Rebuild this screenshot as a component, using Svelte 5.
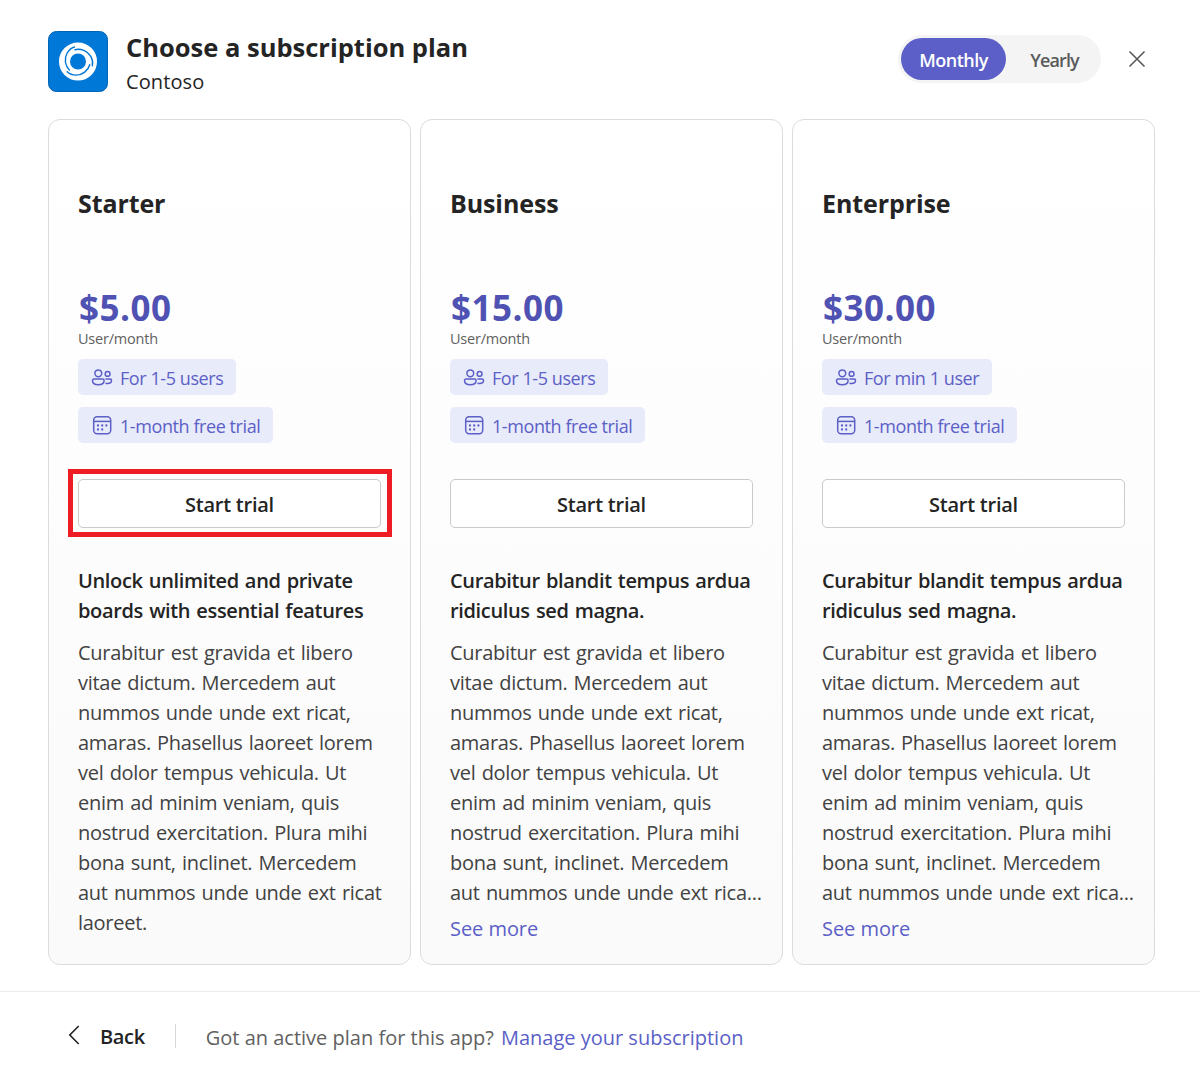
<script>
  const body = [
    'Curabitur est gravida et libero',
    'vitae dictum. Mercedem aut',
    'nummos unde unde ext ricat,',
    'amaras. Phasellus laoreet lorem',
    'vel dolor tempus vehicula. Ut',
    'enim ad minim veniam, quis',
    'nostrud exercitation. Plura mihi',
    'bona sunt, inclinet. Mercedem',
  ];
  const full = [...body, 'aut nummos unde unde ext ricat', 'laoreet.'];
  const clipped = [...body, 'aut nummos unde unde ext rica...'];
  const teaser = ['Curabitur blandit tempus ardua', 'ridiculus sed magna.'];

  const plans = [
    {
      name: 'Starter', price: '$5.00', users: 'For 1-5 users', highlighted: true,
      heading: ['Unlock unlimited and private', 'boards with essential features'],
      lines: full, more: false,
    },
    { name: 'Business', price: '$15.00', users: 'For 1-5 users', heading: teaser, lines: clipped, more: true },
    { name: 'Enterprise', price: '$30.00', users: 'For min 1 user', heading: teaser, lines: clipped, more: true },
  ];
</script>

<div class="dialog">
  <header>
    <svg class="logo" width="60" height="61" viewBox="0 0 60 61">
      <rect x="0.5" y="0.5" width="59" height="60" rx="8" fill="#0078d7" stroke="#0064b4" />
      <circle cx="30" cy="30.5" r="13.5" fill="none" stroke="#fff" stroke-width="11" />
      <!-- three spiral cuts through the ring -->
      <g fill="none" stroke="#0078d7" stroke-width="1.4" stroke-linecap="round">
        <path d="M26.5 16 C20 18 16.5 25 17.4 31 C18 34.5 19.2 37 21.3 39" />
        <path d="M26.5 16 C20 18 16.5 25 17.4 31 C18 34.5 19.2 37 21.3 39" transform="rotate(120 30 30.5)" />
        <path d="M26.5 16 C20 18 16.5 25 17.4 31 C18 34.5 19.2 37 21.3 39" transform="rotate(240 30 30.5)" />
      </g>
    </svg>
    <div class="titles">
      <h1>Choose a subscription plan</h1>
      <p class="publisher">Contoso</p>
    </div>
    <div class="toggle">
      <button class="option selected">Monthly</button>
      <button class="option yearly">Yearly</button>
    </div>
    <button class="close" aria-label="Close">
      <svg width="18" height="18" viewBox="0 0 18 18"><path d="M1.5 1.5 L16.5 16.5 M16.5 1.5 L1.5 16.5" fill="none" stroke="#555" stroke-width="1.5" /></svg>
    </button>
  </header>

  <main>
    {#each plans as plan}
      <section class="card">
        <h2>{plan.name}</h2>
        <div class="price">{plan.price}</div>
        <div class="unit">User/month</div>
        <div class="tag users">
          <svg width="22" height="18" viewBox="0 0 22 18" fill="none" stroke="#5b5fc7" stroke-width="1.5">
            <circle cx="7.3" cy="5.3" r="3.4" />
            <circle cx="16.6" cy="5.9" r="2.4" />
            <path d="M3 11.1 H11.6 A1.5 1.5 0 0 1 13.1 12.6 C13.1 15.4 10.6 16.8 7.3 16.8 C4 16.8 1.5 15.4 1.5 12.6 A1.5 1.5 0 0 1 3 11.1 Z" />
            <path d="M14.4 11.1 H19 A1.5 1.5 0 0 1 20.5 12.6 C20.5 14.7 18.8 15.6 16.6 15.6 C15.8 15.6 15.1 15.5 14.5 15.3" />
          </svg>
          <span>{plan.users}</span>
        </div>
        <div class="tag trial">
          <svg width="22" height="20" viewBox="0 0 22 20" fill="none" stroke="#5b5fc7" stroke-width="1.5">
            <rect x="2.7" y="1.7" width="17" height="17" rx="3.4" />
            <path d="M2.7 6.4 H19.7" />
            <g fill="#5b5fc7" stroke="none">
              <circle cx="7" cy="10.5" r="1.15" /><circle cx="11.2" cy="10.5" r="1.15" /><circle cx="15.4" cy="10.5" r="1.15" />
              <circle cx="7" cy="14.5" r="1.15" /><circle cx="11.2" cy="14.5" r="1.15" />
            </g>
          </svg>
          <span>1-month free trial</span>
        </div>
        <div class="action" class:highlighted={plan.highlighted}>
          <button class="start">Start trial</button>
        </div>
        <h3>{#each plan.heading as line}<span class="line">{line}</span>{/each}</h3>
        <p class="copy">{#each plan.lines as line}<span class="line">{line}</span>{/each}</p>
        {#if plan.more}<span class="more">See more</span>{/if}
      </section>
    {/each}
  </main>

  <footer>
    <button class="back">
      <svg width="12" height="20" viewBox="0 0 12 20"><path d="M10.7 1 L1.8 10 L10.7 19" fill="none" stroke="#222" stroke-width="1.6" /></svg>
      <span>Back</span>
    </button>
    <span class="divider"></span>
    <span class="question">Got an active plan for this app?</span>
    <span class="manage">Manage your subscription</span>
  </footer>
</div>

<style>
  :global(body) { background: #fff; }
  .dialog {
    box-sizing: border-box;
    width: 1200px;
    height: 1077px;
    display: flex;
    flex-direction: column;
    overflow: hidden;
    font-family: 'Segoe UI', 'Open Sans', sans-serif;
    color: #242424;
    white-space: nowrap;
  }
  h1, h2, h3, p { margin: 0; }
  button { font: inherit; color: inherit; border: 0; padding: 0; background: none; }
  header { display: flex; height: 119px; box-sizing: border-box; padding: 31px 54px 0 48px; flex: none; }
  .logo { display: block; flex: none; }
  .titles { margin-left: 18px; flex: 1; }
  h1 { font-size: 25.5px; line-height: 32px; font-weight: 700; letter-spacing: 0; }
  .publisher { margin-top: 3px; font-size: 20px; line-height: 32px; letter-spacing: 0.1px; }
  .toggle {
    box-sizing: border-box;
    display: flex;
    width: 203px;
    height: 48px;
    margin-top: 4px;
    padding: 3px;
    border-radius: 24px;
    background: #f4f4f4;
  }
  .option { flex: 1; height: 42px; padding-top: 1px; font-size: 18px; font-weight: 600; letter-spacing: -0.5px; color: #5a5a5a; border-radius: 21px; }
  .selected { flex: none; width: 105px; background: #5b5fc7; color: #fff; }
  .yearly { padding-left: 5px; letter-spacing: -0.9px; }
  .close { height: 18px; width: 18px; margin: 19px 0 0 27px; }
  .close svg { display: block; }
  main { display: flex; gap: 9px; padding-left: 48px; height: 846px; flex: none; }
  .card {
    box-sizing: border-box;
    width: 363px;
    height: 846px;
    padding: 63px 28px 0 29px;
    border: 1.5px solid #dcdcdc;
    border-radius: 12px;
    background: linear-gradient(#fff, #fafafa);
    display: flex;
    flex-direction: column;
    align-items: flex-start;
  }
  h2 { font-size: 25px; line-height: 40px; letter-spacing: -0.1px; }
  .price { margin: 63px 0 0 1px; font-size: 35px; line-height: 43px; font-weight: 700; color: #4f52b2; letter-spacing: 0.5px; }
  .unit { font-size: 14.5px; line-height: 20px; color: #616161; letter-spacing: -0.2px; }
  .tag {
    box-sizing: border-box;
    display: flex;
    align-items: center;
    gap: 7px;
    height: 36px;
    padding: 0 13px 0 13px;
    border-radius: 5px;
    background: #e8ebfa;
    color: #5b5fc7;
    font-size: 18px;
    letter-spacing: -0.42px;
  }
  .tag span { padding-top: 1px; }
  .users { margin-top: 10px; }
  .trial { margin-top: 12px; }
  .action { box-sizing: border-box; width: 324px; height: 68px; margin: 26px 0 0 -10px; padding: 10px; }
  .highlighted { border: 5px solid #ee1c25; padding: 5px; }
  .start {
    display: block;
    box-sizing: border-box;
    width: 303px;
    height: 49px;
    padding-top: 1px;
    border: 1.5px solid #cacaca;
    border-radius: 5px;
    background: #fff;
    font-size: 20px;
    font-weight: 600;
    letter-spacing: -0.25px;
  }
  h3 { margin-top: 29px; font-size: 20px; line-height: 30px; font-weight: 600; letter-spacing: -0.35px; word-spacing: 1.3px; }
  .line { display: block; }
  .copy { margin-top: 12px; font-size: 20px; line-height: 30px; letter-spacing: -0.28px; word-spacing: 1.3px; color: #424242; }
  .more { margin-top: 6px; font-size: 20px; line-height: 30px; letter-spacing: -0.05px; color: #5b5fc7; }
  footer {
    box-sizing: border-box;
    display: flex;
    align-items: center;
    height: 86px;
    margin-top: 26px;
    padding: 4px 0 0 68px;
    border-top: 1px solid #ebebeb;
    font-size: 20px;
    flex: none;
  }
  .back { display: flex; align-items: center; font-weight: 600; letter-spacing: -0.35px; }
  .back svg { margin-bottom: 4px; }
  .back span { margin-left: 20px; }
  .divider { width: 1px; height: 24px; margin: 0 30px 2px; background: #d6d6d6; }
  .question { color: #616161; padding-top: 1px; }
  .manage { margin-left: 7px; color: #5b5fc7; padding-top: 1px; }
</style>
